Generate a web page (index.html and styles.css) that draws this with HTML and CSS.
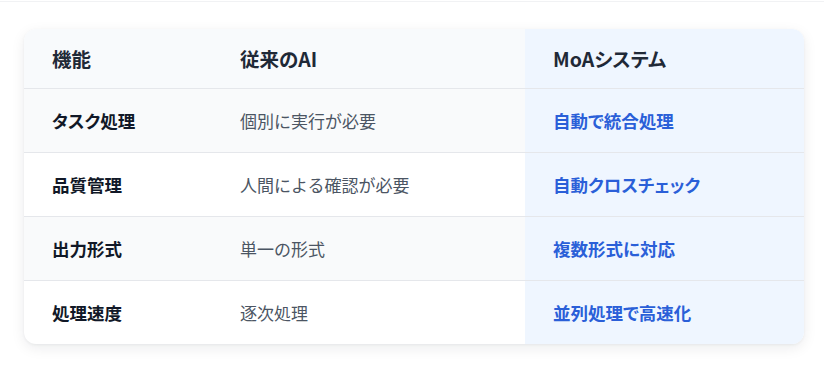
FILE: index.html
```html
<!DOCTYPE html>
<html lang="ja">
<head>
<meta charset="utf-8">
<link rel="stylesheet" href="styles.css">
</head>
<body>
<div class="topline"></div>
<div class="wrap">
  <div class="card">
    <table class="cmp">
      <colgroup><col class="c1"><col class="c2"><col class="c3"></colgroup>
      <thead>
        <tr><th>機能</th><th>従来のAI</th><th class="moa">MoAシステム</th></tr>
      </thead>
      <tbody>
        <tr class="alt"><td class="label">タスク処理</td><td class="old">個別に実行が必要</td><td class="moa">自動で統合処理</td></tr>
        <tr><td class="label">品質管理</td><td class="old">人間による確認が必要</td><td class="moa">自動クロスチェック</td></tr>
        <tr class="alt"><td class="label">出力形式</td><td class="old">単一の形式</td><td class="moa">複数形式に対応</td></tr>
        <tr><td class="label">処理速度</td><td class="old">逐次処理</td><td class="moa">並列処理で高速化</td></tr>
      </tbody>
    </table>
  </div>
</div>
</body>
</html>
```

FILE: styles.css
```css
* { box-sizing: border-box; }
html, body { margin: 0; padding: 0; background: #fff; }
body {
  font-family: "Noto Sans CJK JP", "Noto Sans", sans-serif;
  color: #1f2937;
}
.topline { height: 2px; border-top: 1px solid #f1f2f4; margin-top: 1px; }
.wrap { padding: 26px 20px 23px 24px; }
.card {
  background: #fff;
  border-radius: 12px;
  overflow: hidden;
  box-shadow: 0 4px 14px rgba(15, 23, 42, 0.08), 0 1px 3px rgba(15, 23, 42, 0.05);
}
.cmp { width: 100%; border-collapse: collapse; table-layout: fixed; }
.c1 { width: 188px; }
.c2 { width: 313px; }
.c3 { width: 279px; }
th {
  text-align: left;
  font-size: 19.5px;
  font-weight: 700;
  line-height: 27px;
  padding: 16px 28px;
  background: #f8fafc;
  color: #1f2937;
  border-bottom: 1px solid #e5e7eb;
  font-feature-settings: "palt";
}
td {
  font-size: 17px;
  line-height: 23px;
  padding: 20px 28px;
  border-bottom: 1px solid #e5e7eb;
}
tbody tr:last-child td { border-bottom: none; }
tr.alt td { background: #f9fafb; }
td.label { font-weight: 700; color: #111827; font-size: 17.5px; font-feature-settings: "palt"; }
td.old { color: #4b5563; }
th.moa, td.moa, tr.alt td.moa { background: #eff6ff; }
td.moa { color: #2a5fd8; font-weight: 700; font-size: 17.5px; font-feature-settings: "palt"; }
```
